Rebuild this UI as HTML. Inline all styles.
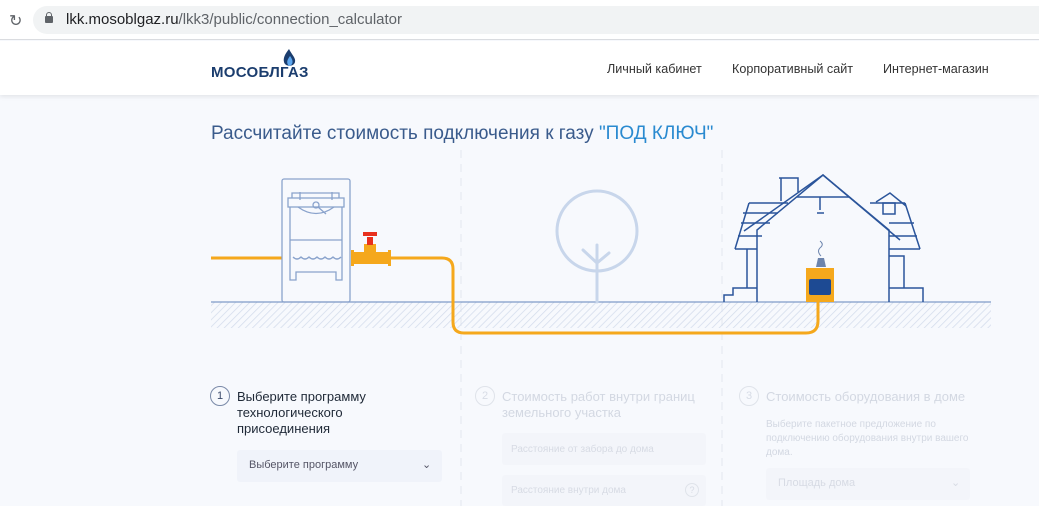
<!DOCTYPE html>
<html><head><meta charset="utf-8"><style>
*{margin:0;padding:0;box-sizing:border-box}
body{width:1039px;height:506px;overflow:hidden;background:#f7f9fd;font-family:"Liberation Sans",sans-serif;position:relative}
.bar{position:absolute;left:0;top:0;width:1039px;height:40px;background:#fff;border-bottom:1px solid #dadce0}
.pill{position:absolute;left:33px;top:6px;width:1020px;height:28px;border-radius:14px;background:#f1f3f4}
.url{position:absolute;left:66px;top:11px;font-size:15px;color:#202124}
.url span{color:#5f6368}
.hdr{position:absolute;left:0;top:41px;width:1039px;height:54px;background:#fff;box-shadow:0 2px 4px rgba(0,0,0,.08)}
.nav{position:absolute;top:62px;font-size:12.6px;color:#333}
.logo{position:absolute;left:211px;top:64px;font-size:15px;font-weight:bold;color:#1b3d6e;letter-spacing:0.3px}
.title{position:absolute;left:211px;top:123px;font-size:19px;color:#3a5b8c}
.title span{color:#2a8ad0}
.t{position:absolute;font-size:13px}
.box{position:absolute;background:#f0f3fa;border-radius:3px}
.circ{position:absolute;width:20px;height:20px;border:1px solid;border-radius:50%;font-size:11px;text-align:center;line-height:18px}
</style></head><body>
<div class="bar"><div class="pill"></div>
<div style="position:absolute;left:9px;top:11px;font-size:16px;color:#5f6368">&#x21bb;</div>
<div style="position:absolute;left:45px;top:16px;width:8px;height:7px;background:#5f6368;border-radius:1px"></div>
<div style="position:absolute;left:46px;top:12px;width:6px;height:6px;border:1.5px solid #5f6368;border-radius:3px 3px 0 0"></div>
<div class="url">lkk.mosoblgaz.ru<span>/lkk3/public/connection_calculator</span></div></div>
<div class="hdr"></div>
<div class="logo">МОСОБЛГАЗ</div>
<svg style="position:absolute;left:283px;top:49px" width="14" height="20"><path d="M6 0 C2 5 0 9 1 13 C2 18 11 18 12 13 C13 9 9 6 6 0Z" fill="#1b3d6e"/><path d="M7 7 C4 11 3 14 6 17 C10 16 11 12 7 7Z" fill="#5ea8f0"/></svg>
<div class="nav" style="left:607px">Личный кабинет</div>
<div class="nav" style="left:732px">Корпоративный сайт</div>
<div class="nav" style="left:883px">Интернет-магазин</div>
<div class="title">Рассчитайте стоимость подключения к газу <span>"ПОД КЛЮЧ"</span></div>
<svg style="position:absolute;left:0;top:0" width="1039" height="506">
<defs><pattern id="h" width="5" height="5" patternUnits="userSpaceOnUse" patternTransform="rotate(45)"><line x1="0" y1="0" x2="0" y2="5" stroke="#d3dcec" stroke-width="1.5"/></pattern></defs>
<line x1="461" y1="150" x2="461" y2="506" stroke="#e3e8f0" stroke-dasharray="8 6"/>
<line x1="722" y1="150" x2="722" y2="506" stroke="#e3e8f0" stroke-dasharray="8 6"/>
<rect x="211" y="302" width="780" height="26" fill="url(#h)"/>
<line x1="211" y1="302" x2="991" y2="302" stroke="#7f9cc8" stroke-width="1.2"/>
<g fill="none" stroke="#f5a81c" stroke-width="3">
<path d="M211 258 H282"/><path d="M390 258 H442 Q453 258 453 269 V322 Q453 333 464 333 H806 Q818 333 818 321 V300"/></g>
<g fill="#f5a81c"><rect x="353" y="252" width="37" height="12"/><rect x="364" y="244" width="12" height="10"/><rect x="351" y="250" width="3" height="16"/><rect x="388" y="250" width="3" height="16"/></g>
<g fill="#e8301e"><rect x="367" y="237" width="6" height="8"/><rect x="363" y="232" width="14" height="4"/></g>
<g fill="none" stroke="#8aa3cc" stroke-width="1.3">
<rect x="282" y="179" width="68" height="123" rx="2"/>
<rect x="288" y="198" width="56" height="9"/>
<path d="M290 207 V280 H296 V272 H336 V280 H342 V207"/><path d="M290 240 H342"/>
<path d="M292 198 V193 H339 V198"/><path d="M300 192 V200 M332 192 V200"/>
<path d="M298 207 Q316 220 334 207"/><circle cx="316" cy="205" r="3"/><path d="M318 207 L326 214"/>
<path d="M293 257 q4 4 8 0 q4 4 8 0 q4 4 8 0 q4 4 8 0 q4 4 8 0 q4 4 8 0"/></g>
<g fill="none" stroke="#c8d6eb" stroke-width="3" stroke-linecap="round"><circle cx="597" cy="231" r="40"/><path d="M597 245 V302 M583 250 L597 263 L609 253"/></g>
<g fill="none" stroke="#2b559b" stroke-width="1.5">
<path d="M757 302 V230 L823 175 L889 230 V302"/><path d="M744 231 L823 175 L900 240"/>
<path d="M797 197 H849"/><path d="M779 178 H798 V192 M781 178 V201"/>
<path d="M749 203 H788 M741 223 H770 M735 249 H757 M743 213 H778 M738 236 H762"/>
<path d="M749 203 L735 249 M905 203 L920 249"/>
<path d="M889 249 H920 M870 203 H905 M889 223 H914 M889 236 H917"/>
<path d="M876 202 L890 193 L906 206"/><rect x="883" y="203" width="12" height="11"/>
<path d="M747 249 V288 M724 302 V295 H733 V288 H757"/>
<path d="M889 256 H904 V288 H889 M904 288 H923 V302"/>
<path d="M820 197 V210 M817 213 H824"/></g>
<rect x="806" y="268" width="28" height="34" fill="#f5a81c"/>
<rect x="809" y="279" width="22" height="16" rx="2" fill="#1d4a93"/>
<path d="M818 258 h6 l2 9 h-10z" fill="#6c84ad"/>
<path d="M821 256 q-5 -5 0 -9 q3 -3 -1 -6" fill="none" stroke="#6c84ad" stroke-width="1"/>
</svg>
<div class="circ" style="left:210px;top:386px;color:#3a4a6a;border-color:#7a8aa8">1</div>
<div class="t" style="left:237px;top:389px;color:#1f2937;line-height:16px">Выберите программу<br>технологического<br>присоединения</div>
<div class="box" style="left:237px;top:450px;width:205px;height:32px"></div>
<div class="t" style="left:249px;top:459px;font-size:11px;color:#556">Выберите программу</div>
<div class="t" style="left:422px;top:458px;font-size:11px;color:#556">&#8964;</div>
<div class="circ" style="left:475px;top:386px;color:#d7dce6;border-color:#dfe3ea">2</div>
<div class="t" style="left:502px;top:389px;color:#d3d8e2;line-height:16px">Стоимость работ внутри границ<br>земельного участка</div>
<div class="box" style="left:502px;top:433px;width:204px;height:32px;background:#f3f5fa"></div>
<div class="t" style="left:511px;top:444px;font-size:10px;color:#d7dbe4">Расстояние от забора до дома</div>
<div class="box" style="left:502px;top:475px;width:204px;height:31px;background:#f3f5fa"></div>
<div class="t" style="left:511px;top:485px;font-size:10px;color:#d7dbe4">Расстояние внутри дома</div>
<div class="circ" style="left:685px;top:483px;width:14px;height:14px;line-height:12px;font-size:9px;color:#d7dbe4;border-color:#dfe3ea">?</div>
<div class="circ" style="left:739px;top:386px;color:#d7dce6;border-color:#dfe3ea">3</div>
<div class="t" style="left:766px;top:389px;color:#d3d8e2">Стоимость оборудования в доме</div>
<div class="t" style="left:766px;top:418px;font-size:10px;color:#d3d8e2;line-height:14px">Выберите пакетное предложение по<br>подключению оборудования внутри вашего<br>дома.</div>
<div class="box" style="left:766px;top:468px;width:204px;height:32px;background:#f3f5fa"></div>
<div class="t" style="left:778px;top:477px;font-size:11px;color:#d7dbe4">Площадь дома</div>
<div class="t" style="left:951px;top:476px;font-size:11px;color:#d7dbe4">&#8964;</div>
</body></html>
